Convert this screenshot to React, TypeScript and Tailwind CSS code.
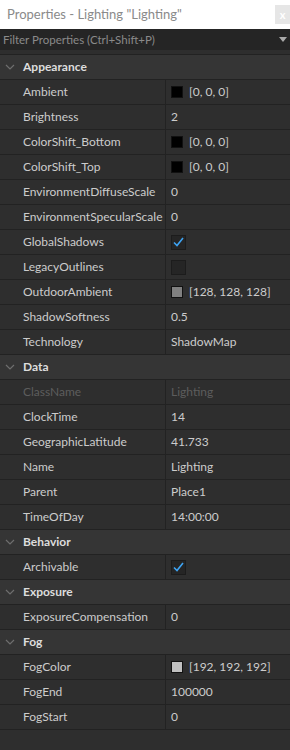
import React from 'react';

type Prop = {
  name: string;
  value?: string;
  color?: string;
  check?: boolean;
  disabled?: boolean;
};

type Section = { title: string; props: Prop[] };

const sections: Section[] = [
  {
    title: 'Appearance',
    props: [
      { name: 'Ambient', value: '[0, 0, 0]', color: '#000000' },
      { name: 'Brightness', value: '2' },
      { name: 'ColorShift_Bottom', value: '[0, 0, 0]', color: '#000000' },
      { name: 'ColorShift_Top', value: '[0, 0, 0]', color: '#000000' },
      { name: 'EnvironmentDiffuseScale', value: '0' },
      { name: 'EnvironmentSpecularScale', value: '0' },
      { name: 'GlobalShadows', check: true },
      { name: 'LegacyOutlines', check: false },
      { name: 'OutdoorAmbient', value: '[128, 128, 128]', color: '#808080' },
      { name: 'ShadowSoftness', value: '0.5' },
      { name: 'Technology', value: 'ShadowMap' },
    ],
  },
  {
    title: 'Data',
    props: [
      { name: 'ClassName', value: 'Lighting', disabled: true },
      { name: 'ClockTime', value: '14' },
      { name: 'GeographicLatitude', value: '41.733' },
      { name: 'Name', value: 'Lighting' },
      { name: 'Parent', value: 'Place1' },
      { name: 'TimeOfDay', value: '14:00:00' },
    ],
  },
  { title: 'Behavior', props: [{ name: 'Archivable', check: true }] },
  { title: 'Exposure', props: [{ name: 'ExposureCompensation', value: '0' }] },
  {
    title: 'Fog',
    props: [
      { name: 'FogColor', value: '[192, 192, 192]', color: '#c0c0c0' },
      { name: 'FogEnd', value: '100000' },
      { name: 'FogStart', value: '0' },
    ],
  },
];

function Chevron() {
  return (
    <svg width="10" height="6" viewBox="0 0 10 6" className="shrink-0">
      <path d="M1 1 L5 5 L9 1" fill="none" stroke="#6e6e6e" strokeWidth="1.2" />
    </svg>
  );
}

function CheckBox({ checked }: { checked: boolean }) {
  return (
    <div className="w-[15px] h-[15px] bg-[#252525] border border-[#1c1c1c] flex items-center justify-center">
      {checked && (
        <svg width="11" height="10" viewBox="0 0 11 10">
          <path d="M1 5.5 L4 8.5 L10 1" fill="none" stroke="#3ea4f4" strokeWidth="1.6" />
        </svg>
      )}
    </div>
  );
}

function Row({ p }: { p: Prop }) {
  const text = p.disabled ? 'text-[#5d5d5d]' : 'text-[#cccccc]';
  return (
    <div className="flex h-[25px] border-b border-[#222222] bg-[#2e2e2e]">
      <div className={`w-[166px] shrink-0 pl-[23px] flex items-center border-r border-[#222222] whitespace-nowrap overflow-hidden ${text}`}>
        {p.name}
      </div>
      <div className={`flex-1 flex items-center pl-[5px] ${text}`}>
        {p.check !== undefined ? (
          <CheckBox checked={p.check} />
        ) : p.color ? (
          <>
            <div className="w-[12px] h-[12px] border border-[#111] mr-[6px]" style={{ background: p.color }} />
            <span>{p.value}</span>
          </>
        ) : (
          <span>{p.value}</span>
        )}
      </div>
    </div>
  );
}

export default function App() {
  return (
    <div className="w-[290px] h-[750px] bg-[#2e2e2e] overflow-hidden text-[12px] leading-none" style={{ fontFamily: 'Lato, "Open Sans", sans-serif' }}>
      <div className="h-[29px] bg-white flex items-center justify-between">
        <span className="pl-[7px] text-[13px] text-[#8a8a8a]">Properties - Lighting "Lighting"</span>
        <div className="w-[15px] h-[19px] bg-[#e6e6e6] flex items-center justify-center text-white text-[11px] font-bold">x</div>
      </div>
      <div className="h-[21px] bg-[#252525] flex items-center justify-between pl-[3px] pr-[3px]">
        <span className="text-[#8a8a8a] text-[11.5px]">Filter Properties (Ctrl+Shift+P)</span>
        <svg width="8" height="5" viewBox="0 0 8 5">
          <path d="M0 0 H8 L4 5 Z" fill="#aaaaaa" />
        </svg>
      </div>
      <div className="h-[5px] border-b border-[#222222] bg-[#2e2e2e]" />
      {sections.map((s) => (
        <div key={s.title}>
          <div className="h-[25px] bg-[#353535] border-b border-[#222222] flex items-center pl-[5px] gap-[8px]">
            <Chevron />
            <span className="font-bold text-[#dddddd]">{s.title}</span>
          </div>
          {s.props.map((p) => (
            <Row key={p.name} p={p} />
          ))}
        </div>
      ))}
    </div>
  );
}
